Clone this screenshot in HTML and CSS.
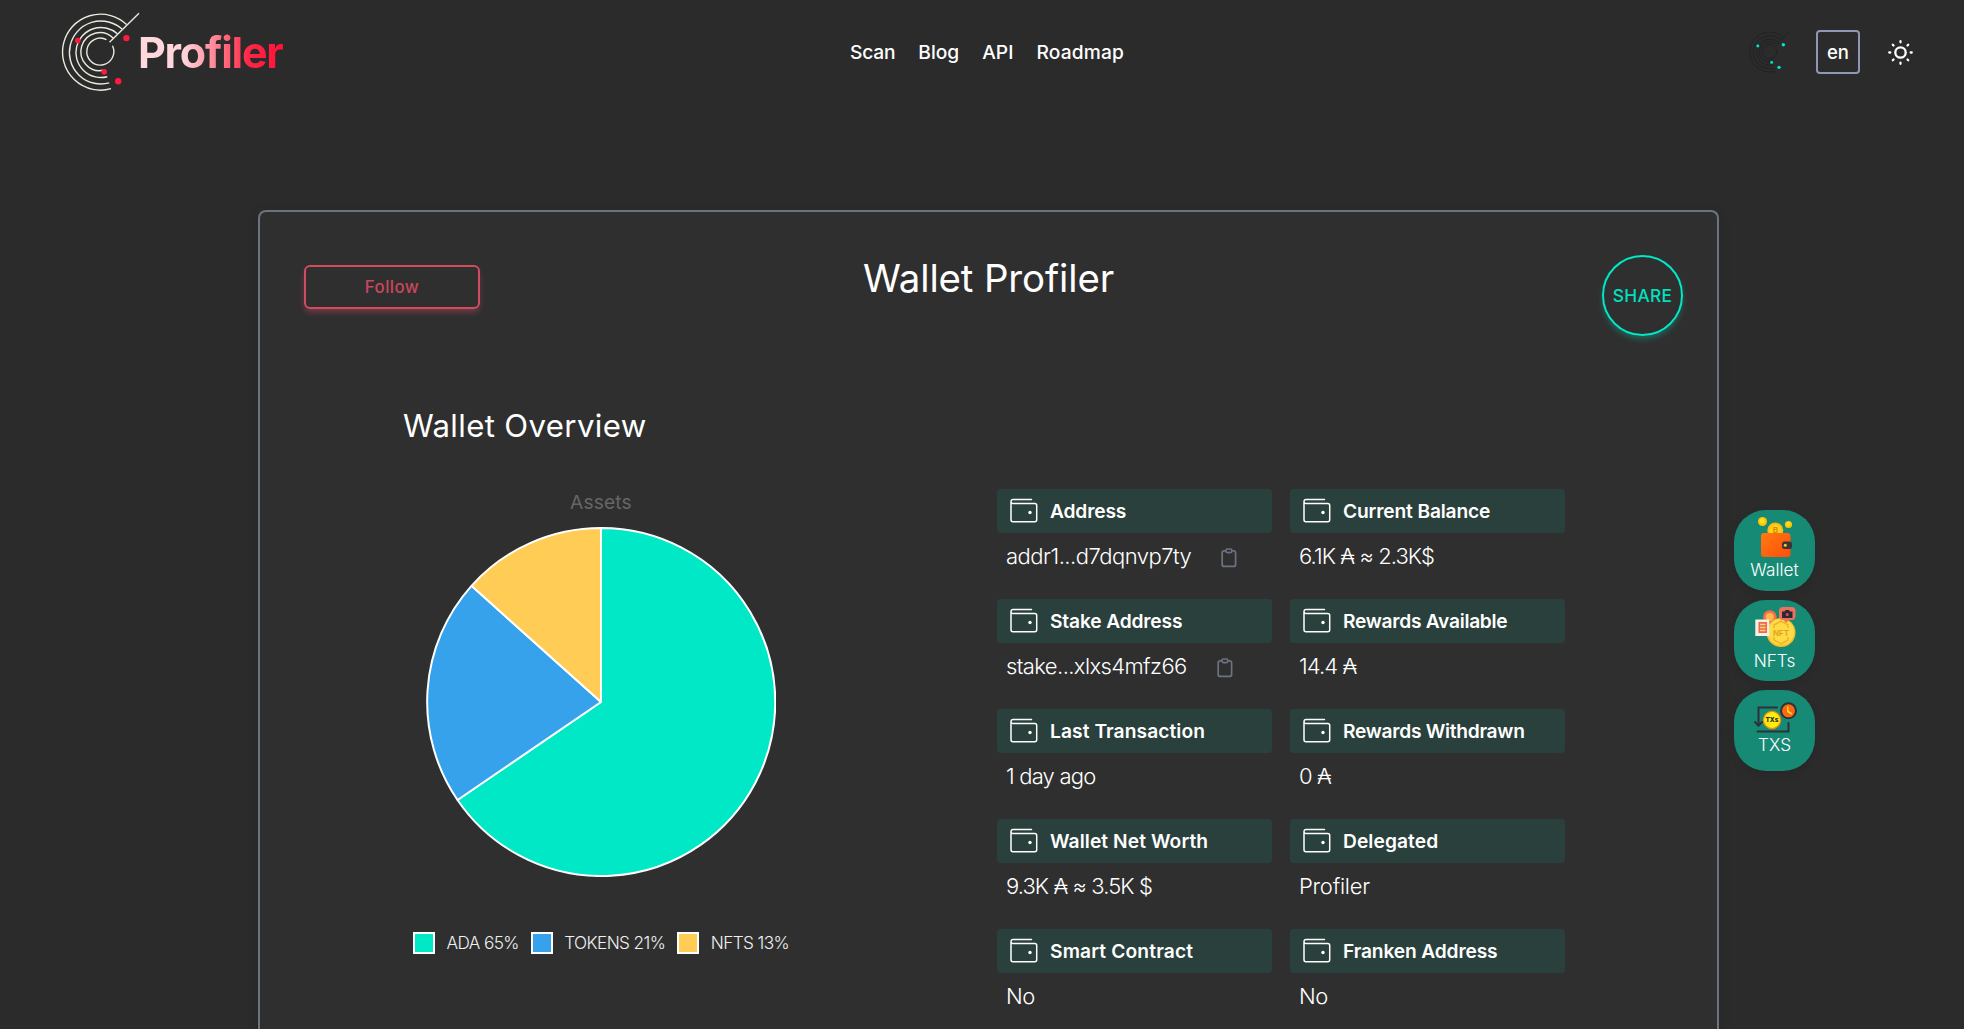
FILE: index.html
```html
<!DOCTYPE html>
<html lang="en">
<head>
<meta charset="utf-8">
<title>Wallet Profiler</title>
<link rel="stylesheet" href="styles.css">
</head>
<body>
<svg class="defs" aria-hidden="true">
  <defs>
    <symbol id="rings" viewBox="0 0 80 80">
      <g fill="none" stroke="currentColor" stroke-width="1.4">
        <path d="M65.6 12.5A38 38 0 1 0 50 76.7"/>
        <path d="M61 17.1A31.5 31.5 0 1 0 48.2 70.9"/>
        <path d="M56.4 21.7A25 25 0 1 0 46.3 64.7"/>
        <path d="M52.1 26A19 19 0 1 0 42.5 58.3"/>
        <path d="M45.5 27.6A13.5 13.5 0 1 0 51.5 33.8"/>
        <path d="M48.5 30.3L78 1.3"/>
      </g>
    </symbol>
    <symbol id="dots" viewBox="0 0 80 80">
      <g fill="currentColor">
        <circle cx="16.8" cy="28.6" r="2.8"/><circle cx="65.4" cy="26.1" r="3.2"/>
        <circle cx="43.2" cy="59.8" r="2.8"/><circle cx="57.2" cy="69.2" r="3.2"/>
      </g>
    </symbol>
    <symbol id="purse" viewBox="0 0 28 26">
      <g fill="none" stroke="#fff" stroke-width="1.5" stroke-linecap="round" stroke-linejoin="round">
        <path d="M21.5 1.5H3.2Q1 1.5 1 3.7V21.8Q1 23.8 3 23.8H24.7Q26.7 23.8 26.7 21.8V7.6Q26.7 5.6 24.7 5.6H3.2Q1 5.6 1 3.6"/>
      </g>
      <circle cx="20" cy="14.5" r="1.7" fill="#fff"/>
    </symbol>
    <symbol id="clip" viewBox="0 0 16 20">
      <g fill="none" stroke="#6b7280" stroke-width="1.7">
        <path d="M4.5 2.8H3.2Q1.2 2.8 1.2 4.8V16.4Q1.2 18.4 3.2 18.4H12.6Q14.6 18.4 14.6 16.4V4.8Q14.6 2.8 12.6 2.8H11.3"/>
        <rect x="4.9" y="1" width="6" height="3.6" rx="1.6"/>
      </g>
    </symbol>
  </defs>
</svg>

<header class="topbar">
  <a class="brand">
    <span class="emblem">
      <svg class="emblem-rings"><use href="#rings"/></svg>
      <svg class="emblem-dots"><use href="#dots"/></svg>
    </span>
    <span class="brand-name">Profiler</span>
  </a>
  <nav class="nav"><a class="nav-scan">Scan</a><a class="nav-blog">Blog</a><a class="nav-api">API</a><a class="nav-roadmap">Roadmap</a></nav>
  <div class="tools">
    <span class="emblem emblem-small">
      <svg class="emblem-rings"><use href="#rings"/></svg>
      <svg class="emblem-dots"><use href="#dots"/></svg>
    </span>
    <button class="lang">en</button>
    <svg class="sun" viewBox="0 0 24 24" fill="none" stroke="#fff" stroke-width="2.2" stroke-linecap="round">
      <circle cx="12" cy="12" r="5"/>
      <path d="M12 1.2v1M12 21.8v1M1.2 12h1M21.8 12h1M4.6 4.6l.7.7M18.7 18.7l.7.7M4.6 19.4l.7-.7M18.7 5.3l.7-.7"/>
    </svg>
  </div>
</header>

<main class="page">
  <section class="card">
    <div class="card-head">
      <button class="follow">Follow</button>
      <h1 class="title">Wallet Profiler</h1>
      <button class="share">SHARE</button>
    </div>
    <h2 class="subtitle">Wallet Overview</h2>
    <div class="overview">
      <div class="chart">
        <div class="chart-title">Assets</div>
        <svg class="pie" viewBox="-175 -175 350 350" stroke="#fff" stroke-width="2" stroke-linejoin="bevel">
          <path fill="#00e8c6" d="M0 0V-174A174 174 0 1 1 -143.5 98Z"/>
          <path fill="#36a2eb" d="M0 0L-143.5 98A174 174 0 0 1 -129.5 -116.2Z"/>
          <path fill="#ffcd56" d="M0 0L-129.5 -116.2A174 174 0 0 1 0 -174Z"/>
        </svg>
        <div class="legend">
          <span class="key key-ada">ADA 65%</span>
          <span class="key key-tokens">TOKENS 21%</span>
          <span class="key key-nfts">NFTS 13%</span>
        </div>
      </div>
      <dl class="facts">
        <div class="fact"><dt><svg class="purse"><use href="#purse"/></svg>Address</dt><dd><span class="hash">addr1...d7dqnvp7ty</span><svg class="clip"><use href="#clip"/></svg></dd></div>
        <div class="fact"><dt><svg class="purse"><use href="#purse"/></svg>Current Balance</dt><dd class="amount">6.1K ₳ ≈ 2.3K$</dd></div>
        <div class="fact"><dt><svg class="purse"><use href="#purse"/></svg>Stake Address</dt><dd><span class="hash hash-stake">stake...xlxs4mfz66</span><svg class="clip"><use href="#clip"/></svg></dd></div>
        <div class="fact"><dt class="tight"><svg class="purse"><use href="#purse"/></svg>Rewards Available</dt><dd class="amount">14.4 ₳</dd></div>
        <div class="fact"><dt class="loose"><svg class="purse"><use href="#purse"/></svg>Last Transaction</dt><dd class="age">1 day ago</dd></div>
        <div class="fact"><dt class="tight"><svg class="purse"><use href="#purse"/></svg>Rewards Withdrawn</dt><dd class="amount">0 ₳</dd></div>
        <div class="fact"><dt class="loose"><svg class="purse"><use href="#purse"/></svg>Wallet Net Worth</dt><dd class="amount">9.3K ₳ ≈ 3.5K $</dd></div>
        <div class="fact"><dt class="loose"><svg class="purse"><use href="#purse"/></svg>Delegated</dt><dd class="pool">Profiler</dd></div>
        <div class="fact"><dt class="wide"><svg class="purse"><use href="#purse"/></svg>Smart Contract</dt><dd>No</dd></div>
        <div class="fact"><dt><svg class="purse"><use href="#purse"/></svg>Franken Address</dt><dd>No</dd></div>
      </dl>
    </div>
  </section>

  <aside class="side">
    <a class="side-item">
      <svg width="81" height="50" viewBox="0 0 81 50">
        <defs><linearGradient id="leather" x2="1" y2="1"><stop offset="0" stop-color="#ff7a12"/><stop offset="1" stop-color="#ff4d0a"/></linearGradient></defs>
        <circle cx="28.5" cy="11.5" r="4.5" fill="#fdc50a"/><circle cx="28.2" cy="11" r="2.6" fill="#ffe01c"/>
        <circle cx="54.5" cy="14.5" r="3.6" fill="#fdc50a"/><circle cx="54.2" cy="14" r="2" fill="#ffe01c"/>
        <circle cx="41.3" cy="20.5" r="8" fill="#fdb90e"/><circle cx="41.3" cy="20.5" r="6" fill="#ffd21c"/>
        <text x="41.3" y="23" text-anchor="middle" font-size="8" font-weight="700" fill="#e08a00">B</text>
        <rect x="27" y="23" width="29.5" height="24" rx="3" fill="url(#leather)"/>
        <rect x="48" y="31.5" width="10" height="7.5" rx="2.5" fill="#3a3435"/><circle cx="51.3" cy="35.3" r="1.5" fill="#ffc928"/>
      </svg>
      Wallet
    </a>
    <a class="side-item">
      <svg width="81" height="51" viewBox="0 0 81 51">
        <circle cx="35.8" cy="17" r="6.8" fill="#f5704a"/><circle cx="35.8" cy="17" r="4" fill="#ffb64a"/>
        <circle cx="47" cy="32.5" r="14.5" fill="#f5c02c"/><circle cx="47" cy="32" r="13" fill="#ffdb45"/>
        <path d="M40 28V25l7-4 7 4v3M40 37v3l7 4 7-4v-3" fill="none" stroke="#f2b62a" stroke-width="1.6"/>
        <text x="47" y="35.5" text-anchor="middle" font-size="8" font-weight="700" fill="#e0a428">NFT</text>
        <rect x="21.3" y="19.5" width="14" height="16.5" fill="#f6efe9"/>
        <rect x="24.5" y="22" width="8.5" height="11" fill="#ef6a3c"/><path d="M26 24.5h5.5M26 27.5h5.5M26 30.5h5.5" stroke="#ffd08a" stroke-width="1.3"/>
        <path d="M49 19h7l-4 4z" fill="#f0705c"/>
        <rect x="45" y="7" width="16.5" height="13" rx="4" fill="#f0705c"/>
        <path d="M48 11.5h2.500l1-1.500h3.500l1 1.500h2.500v6.500H48z" fill="#2b2a33"/><circle cx="53.2" cy="14.500" r="1.500" fill="#c8594e"/>
      </svg>
      NFTs
    </a>
    <a class="side-item">
      <svg width="81" height="45" viewBox="0 0 81 45">
        <g fill="none" stroke="#2b3338" stroke-width="2" stroke-linecap="round" stroke-linejoin="round">
          <path d="M43 17.5H24.5V35"/><path d="M21 32L24.5 35.800L28 32"/><path d="M23.5 41.5H54.5V33"/>
        </g>
        <circle cx="38" cy="30" r="8.6" fill="#ffee0a" stroke="#f58a12" stroke-width="1.3"/>
        <text x="38" y="32.400" text-anchor="middle" font-size="6.500" font-weight="800" fill="#1f2a36">TXs</text>
        <circle cx="54.5" cy="20.800" r="7.500" fill="#fb6a10" stroke="#2b3338" stroke-width="2"/>
        <path d="M53.8 16.500V21.500L58 24" fill="none" stroke="#ffd83a" stroke-width="1.500"/>
      </svg>
      TXS
    </a>
  </aside>
</main>
</body>
</html>
```
FILE: styles.css
```css
*, *::before { box-sizing: border-box; }

body {
  margin: 0;
  background: #2b2b2b;
  color: #fff;
  font-family: Inter, "Noto Sans", sans-serif;
}

button { background: none; padding: 0; font-family: inherit; }
.defs { position: absolute; width: 0; height: 0; }

/* Top bar */
.topbar {
  display: grid;
  grid-template-columns: 1fr auto 1fr;
  align-items: center;
  height: 104px;
  padding: 0 51px 0 61px;
}
.brand { display: flex; align-items: center; }
.emblem { display: grid; width: 80px; height: 80px; color: #e9ebdc; }
.emblem svg { grid-area: 1 / 1; width: 100%; height: 100%; }
.emblem .emblem-dots { color: #ff1a3e; }
.brand-name {
  margin-left: -3px;
  background: linear-gradient(90deg, #ffd9df 0%, #ffd3da 32%, #ff8a98 52%, #ff2747 76%, #ff1238 100%);
  -webkit-background-clip: text;
  background-clip: text;
  color: transparent;
  font-size: 43px;
  font-weight: 700;
  letter-spacing: -1.25px;
  line-height: 60px;
}
.nav { display: flex; gap: 23px; font-size: 19.2px; font-weight: 500; line-height: 30px; }
.nav-scan { letter-spacing: -0.2px; }
.nav-roadmap { letter-spacing: 0.15px; }
.tools { display: flex; align-items: center; justify-content: flex-end; }
.emblem-small { width: 42px; height: 42px; margin-right: 25px; color: #1d1e1f; }
.emblem-small .emblem-dots { color: #00e8c5; }
.lang {
  width: 44px;
  height: 44px;
  border: 2px solid #8d98b3;
  border-radius: 4px;
  color: #fff;
  font-size: 18.5px;
  font-weight: 500;
}
.sun { width: 25px; height: 25px; margin-left: 28px; }

/* Page body */
.page { display: flex; gap: 15px; height: 925px; padding: 106px 0 0 258px; overflow: hidden; }
.card {
  flex: none;
  width: 1461px;
  border: 2px solid #6b7280;
  border-bottom: 0;
  border-radius: 8px 8px 0 0;
  background: #2f2f2f;
  box-shadow: 0 4px 12px rgba(0, 0, 0, .15);
}
.card-head {
  display: grid;
  grid-template-columns: 1fr auto 1fr;
  align-items: start;
  padding: 43px 34px 0;
}
.follow {
  width: 176px;
  height: 44px;
  margin: 10px 0 0 10px;
  border: 2px solid #d14b61;
  border-radius: 6px;
  box-shadow: 0 4px 6px -1px rgba(209, 75, 97, .45);
  color: #c9475c;
  font-size: 16.8px;
  font-weight: 500;
  letter-spacing: .45px;
}
.title { margin: 0; font-size: 38.4px; font-weight: 400; letter-spacing: -.12px; line-height: 46px; }
.share {
  justify-self: end;
  width: 81px;
  height: 81px;
  border: 2px solid #00e8c6;
  border-radius: 50%;
  box-shadow: 0 4px 6px -1px rgba(0, 232, 198, .3);
  color: #00e0bf;
  font-size: 17.3px;
  font-weight: 500;
  letter-spacing: .3px;
}
.subtitle { margin: 70px 0 0 143px; font-size: 31.2px; font-weight: 400; letter-spacing: .35px; line-height: 40px; }
.overview { display: grid; grid-template-columns: 682px 568px; column-gap: 55px; margin-top: 43px; }

/* Chart */
.chart { display: flex; flex-direction: column; align-items: center; }
.chart-title { color: #666; font-size: 19.2px; letter-spacing: .15px; line-height: 26px; }
.pie { width: 350px; height: 350px; margin-top: 12px; }
.legend { display: flex; gap: 12px; margin-top: 55px; font-size: 17.2px; font-weight: 300; letter-spacing: -.6px; line-height: 22px; }
.key { display: flex; gap: 11.5px; color: #f0f0f0; }
.key::before { content: ""; width: 22px; height: 22px; border: 2px solid #fff; }
.key-ada::before { background: #00e8c6; }
.key-tokens::before { background: #36a2eb; }
.key-nfts::before { background: #ffcd56; }

/* Wallet facts */
.facts { display: grid; grid-template-columns: 275px 275px; grid-auto-rows: 110px; column-gap: 18px; margin: 0; }
.fact dt {
  display: flex;
  align-items: center;
  gap: 12px;
  height: 44px;
  padding-left: 13px;
  border-radius: 4px;
  background: #2a403c;
  font-size: 19.2px;
  font-weight: 600;
  letter-spacing: -.15px;
}
.fact .tight { letter-spacing: -.28px; }
.fact .loose { letter-spacing: .08px; }
.fact .wide { letter-spacing: .15px; }
.purse { width: 28px; height: 26px; }
.fact dd {
  display: flex;
  align-items: center;
  margin: 5px 0 0;
  padding-left: 9px;
  font-size: 22px;
  font-weight: 300;
  letter-spacing: -.5px;
  line-height: 36px;
}
.fact .amount { letter-spacing: -.92px; }
.fact .age { letter-spacing: -.8px; }
.fact .pool { letter-spacing: -.25px; }
.hash-stake { letter-spacing: -.6px; }
.clip { width: 16px; height: 20px; margin: 3px 0 0 30px; }

/* Side shortcuts */
.side { display: flex; flex-direction: column; gap: 9px; padding-top: 300px; }
.side-item {
  display: flex;
  flex-direction: column;
  align-items: center;
  width: 81px;
  height: 81px;
  border-radius: 32px;
  background: #178a76;
  box-shadow: 0 3px 8px rgba(0, 0, 0, .1);
  font-size: 17.2px;
  font-weight: 300;
  line-height: 20px;
}
```
